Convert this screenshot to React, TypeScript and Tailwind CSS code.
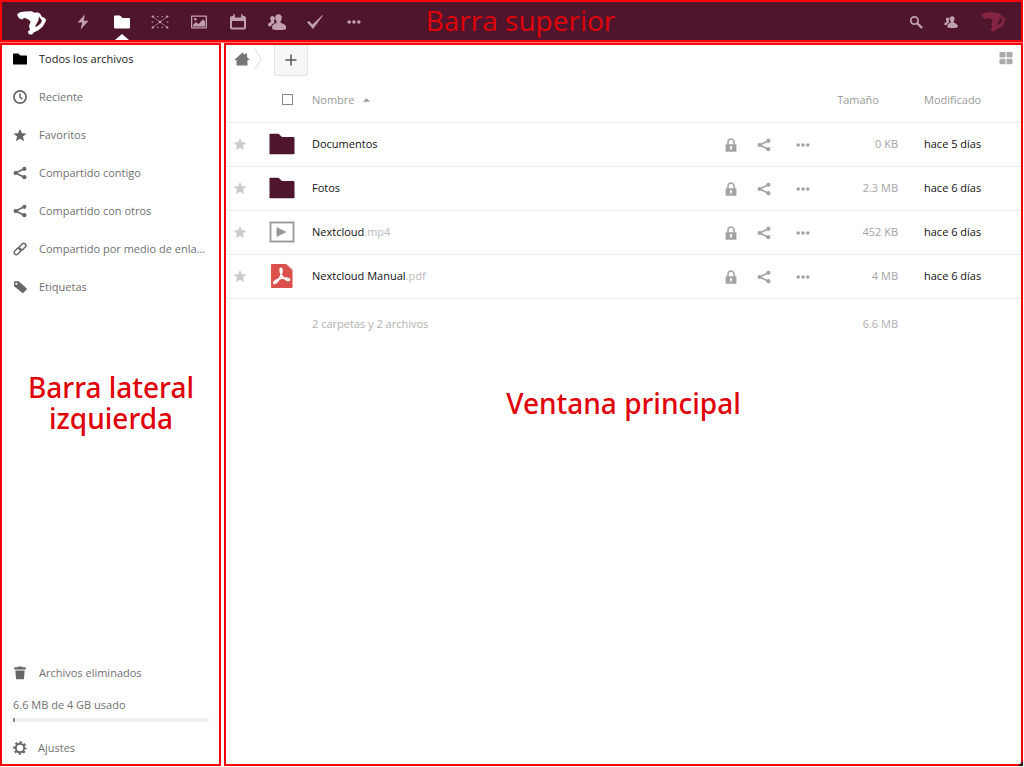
import React from "react";

type IconProps = { className?: string };

const Folder = ({ className }: IconProps) => (
  <svg viewBox="0 0 16 16" className={className} fill="currentColor" aria-hidden="true">
    <path d="M0 2.4Q0 1.6.8 1.6H6L8.6 4H15.2Q16 4 16 4.8V13.6Q16 14.4 15.2 14.4H.8Q0 14.4 0 13.6Z" />
  </svg>
);

const Logo = ({ className }: IconProps) => (
  <svg viewBox="0 0 30 24" className={className} fill="currentColor" aria-hidden="true">
    <path
      fillRule="evenodd"
      d="M.3 3 3 1.200 8 .4l6.500-.2L18 1.800 20 1.200l3 1.300 2 3.500 2 .5 2.200 2.300-1.200 3-2.400 4L21 19.400l-4 1.800L15 23.400l-3.200-.2-1-2.600L13 19l-1-4 1.600-4.600L11 8.200 7 6.800 5.600 8.400 2.400 7.600.6 5.200ZM22 5.600l-.6 4L17.800 15.800l2.600-.6L23.600 12.600 25 9.800Z"
    />
  </svg>
);

const Bolt = ({ className }: IconProps) => (
  <svg viewBox="0 0 16 16" className={className} fill="currentColor" aria-hidden="true">
    <path d="M9.800.5 2.600 8.600H7.200L5.600 15.500 13.600 6.800H8.800Z" />
  </svg>
);

const Nodes = ({ className }: IconProps) => (
  <svg viewBox="0 0 20 16" className={className} fill="currentColor" aria-hidden="true">
    <path d="M3 2.500 17 13.500M17 2.500 3 13.500" stroke="currentColor" strokeWidth="1" strokeDasharray="2 .7" />
    <circle cx="2" cy="2" r="1.300" />
    <circle cx="18" cy="2" r="1.300" />
    <circle cx="2" cy="14" r="1.300" />
    <circle cx="18" cy="14" r="1.300" />
    <circle cx="10" cy="8" r="1.500" />
    <circle cx="7.500" cy="2" r=".8" />
    <circle cx="12.500" cy="2" r=".8" />
    <circle cx="7.500" cy="14" r=".8" />
    <circle cx="12.500" cy="14" r=".8" />
    <circle cx="1.500" cy="8" r=".8" />
    <circle cx="18.500" cy="8" r=".8" />
  </svg>
);

const Picture = ({ className }: IconProps) => (
  <svg viewBox="0 0 16 16" className={className} fill="currentColor" aria-hidden="true">
    <path fillRule="evenodd" d="M.7 1.500H15.300Q16 1.500 16 2.200V13.800Q16 14.500 15.300 14.500H.7Q0 14.500 0 13.800V2.200Q0 1.500.7 1.500ZM1.300 2.800V13.200H14.700V2.800Z" />
    <path d="M2 12.500V11L5 8l2.500 2.200L12 5.200l2 2.300v5Z" />
    <circle cx="4.300" cy="5.200" r="1.300" />
  </svg>
);

const Calendar = ({ className }: IconProps) => (
  <svg viewBox="0 0 16 16" className={className} fill="currentColor" aria-hidden="true">
    <path
      fillRule="evenodd"
      d="M3.200 1Q3.200 0 4 0T4.900 1V3.500H11.100V1Q11.100 0 12 0T12.800 1V2H14Q16 2 16 4V13.500Q16 15.500 14 15.500H2Q0 15.500 0 13.500V4Q0 2 2 2H3.200ZM2 7V13.500H14V7Z"
    />
  </svg>
);

const People = ({ className }: IconProps) => (
  <svg viewBox="0 0 18 16" className={className} fill="currentColor" aria-hidden="true">
    <path d="M10.500.2c2 0 3.300 1.500 3.300 3.500 0 1.300-.4 2.500-1.200 3.300v1.500c.4 1 5.400 1.500 5.400 4.200v2.300c-1 .7-3 1-7 1s-6-.3-6.800-1v-2.300c0-2.700 4-3.200 4.400-4.200V7C7.700 6.200 7.200 5 7.200 3.700 7.200 1.700 8.500.2 10.500.2Z" />
    <path d="M4.500 2c1.400 0 2.300 1 2.300 2.500 0 1-.3 1.700-.8 2.200v1l1 .8C5.300 9.700 3.300 10 3.200 12.300 1.500 12.200.5 12 0 11.700v-1.200c0-1.700 2.600-2.100 3-2.800v-1c-.5-.5-.8-1.200-.8-2.200C2.200 3 3.100 2 4.500 2Z" />
  </svg>
);

const Check = ({ className }: IconProps) => (
  <svg viewBox="0 0 16 16" className={className} fill="currentColor" aria-hidden="true">
    <path d="M0 8.300 2.200 7 5.400 10.600 15.600 1 16 1.500 6 15Z" />
  </svg>
);

const Dots = ({ className }: IconProps) => (
  <svg viewBox="0 0 16 16" className={className} fill="currentColor" aria-hidden="true">
    <circle cx="3.200" cy="8" r="1.800" />
    <circle cx="8" cy="8" r="1.800" />
    <circle cx="12.800" cy="8" r="1.800" />
  </svg>
);

const Search = ({ className }: IconProps) => (
  <svg viewBox="0 0 16 16" className={className} fill="none" stroke="currentColor" aria-hidden="true">
    <circle cx="6.200" cy="6.200" r="4.200" strokeWidth="2" />
    <path d="m9.500 9.500 4.700 4.700" strokeWidth="2.600" strokeLinecap="round" />
  </svg>
);

const Clock = ({ className }: IconProps) => (
  <svg viewBox="0 0 16 16" className={className} fill="none" stroke="currentColor" aria-hidden="true">
    <circle cx="8" cy="8" r="6.900" strokeWidth="2" />
    <path d="M8 4v4.200l2.800 2.400" strokeWidth="1.800" />
  </svg>
);

const Star = ({ className }: IconProps) => (
  <svg viewBox="0 0 16 16" className={className} fill="currentColor" aria-hidden="true">
    <path d="m8 .8 2.100 5.100 5.500.4-4.200 3.500 1.300 5.400L8 12.300l-4.700 2.900 1.300-5.400L.4 6.300l5.500-.4Z" />
  </svg>
);

const Share = ({ className }: IconProps) => (
  <svg viewBox="0 0 16 16" className={className} fill="currentColor" aria-hidden="true">
    <path d="M13 3.200 3 8l10 4.800" fill="none" stroke="currentColor" strokeWidth="2" />
    <circle cx="13" cy="3.200" r="2.400" />
    <circle cx="3" cy="8" r="2.400" />
    <circle cx="13" cy="12.800" r="2.400" />
  </svg>
);

const LinkIcon = ({ className }: IconProps) => (
  <svg viewBox="0 0 16 16" className={className} fill="none" stroke="currentColor" strokeWidth="1.700" aria-hidden="true">
    <rect x="6.300" y="2.900" width="9" height="5" rx="2.500" transform="rotate(-45 10.800 5.400)" />
    <rect x=".7" y="8.100" width="9" height="5" rx="2.500" transform="rotate(-45 5.200 10.600)" />
  </svg>
);

const Tag = ({ className }: IconProps) => (
  <svg viewBox="0 0 16 16" className={className} fill="currentColor" aria-hidden="true">
    <path fillRule="evenodd" d="M2 1.500h4.500l9 8q.6.700 0 1.400l-3.600 3.800q-.7.700-1.400 0L1.200 7V2.500Q1.200 1.500 2 1.500ZM3.800 3a1.200 1.200 0 1 0 .1 0Z" />
  </svg>
);

const Trash = ({ className }: IconProps) => (
  <svg viewBox="0 0 16 16" className={className} fill="currentColor" aria-hidden="true">
    <path d="M5.500 1.300 6.200.6h3.600l.7.700H14.500V4H1.500V1.300ZM2.600 5h10.800l-1 10.200H3.600Z" />
  </svg>
);

const Gear = ({ className }: IconProps) => (
  <svg viewBox="0 0 16 16" className={className} fill="none" stroke="currentColor" aria-hidden="true">
    <circle cx="8" cy="8" r="4.800" strokeWidth="2.200" />
    <circle cx="8" cy="8" r="6.700" strokeWidth="2.200" strokeDasharray="2.600 2.662" strokeDashoffset="1.300" />
  </svg>
);

const Home = ({ className }: IconProps) => (
  <svg viewBox="0 0 16 16" className={className} fill="currentColor" aria-hidden="true">
    <path d="M8.500 1.500 11 4V2.500h2V6l2.800 3H13.500v5.500h-11V9H.2Z" />
  </svg>
);

const Lock = ({ className }: IconProps) => (
  <svg viewBox="0 0 16 16" className={className} fill="currentColor" aria-hidden="true">
    <path
      fillRule="evenodd"
      d="M8 .2c2.700 0 4.400 2 4.400 4.500V7H14.200v8.800H1.800V7H3.600V4.700C3.600 2.200 5.300.2 8 .2ZM8 2C6.400 2 5.400 3.200 5.400 4.800V7h5.200V4.800C10.600 3.200 9.600 2 8 2ZM8 9a1.400 1.400 0 0 0-.8 2.500V13.500H8.800V11.500A1.400 1.400 0 0 0 8 9Z"
    />
  </svg>
);

const FolderFile = () => (
  <svg viewBox="0 0 26 22" className="block h-[22px] w-[26px] fill-[#4f152d]" aria-hidden="true">
    <path d="M.5 1.500Q.5.800 1.200.8H9.500L13 4H24.500Q25.500 4 25.500 5V20.300Q25.500 21.300 24.500 21.300H.5Z" />
  </svg>
);

const VideoFile = () => (
  <svg viewBox="0 0 26 22" className="block h-[22px] w-[26px]" aria-hidden="true">
    <rect x="1.500" y="1.500" width="23" height="19" fill="none" stroke="#969696" strokeWidth="1.800" />
    <path d="M7.500 6 17.500 11 7.500 16Z" fill="#969696" />
  </svg>
);

const PdfFile = () => (
  <svg viewBox="0 0 26 26" className="block size-[26px]" aria-hidden="true">
    <path d="M3 1H17L23.500 7V24Q23.500 25 22.500 25H3Q2 25 2 24V2Q2 1 3 1Z" fill="#d9504c" />
    <path d="M17.500 1 23.500 6.800" stroke="#eeb0ae" strokeWidth="1" />
    <path
      d="M11.500 5.500c2-1 1.800 3.500.3 7-1.600 4-4.500 8-6.600 8-1.800-1.500 3.500-4.800 8-5.300 4-.6 7.500.4 7.200 1.700-.6 1.600-4.800-.4-6.900-3.200-2-2.700-3-7.500-2-8.200Z"
      fill="none"
      stroke="#fff"
      strokeWidth="1.700"
    />
  </svg>
);

const apps = [
  { label: "Actividad", Icon: Bolt, size: "size-4" },
  { label: "Archivos", Icon: Folder, size: "size-4" },
  { label: "Nodos", Icon: Nodes, size: "h-4 w-[18px]" },
  { label: "Galería", Icon: Picture, size: "size-4" },
  { label: "Calendario", Icon: Calendar, size: "size-4" },
  { label: "Contactos", Icon: People, size: "h-4 w-[18px]" },
  { label: "Tareas", Icon: Check, size: "size-4" },
  { label: "Más", Icon: Dots, size: "size-4" },
];

const places = [
  { label: "Todos los archivos", Icon: Folder },
  { label: "Reciente", Icon: Clock },
  { label: "Favoritos", Icon: Star },
  { label: "Compartido contigo", Icon: Share },
  { label: "Compartido con otros", Icon: Share },
  { label: "Compartido por medio de enla...", Icon: LinkIcon },
  { label: "Etiquetas", Icon: Tag },
];

const files = [
  { name: "Documentos", ext: "", size: "0 KB", date: "hace 5 días", File: FolderFile },
  { name: "Fotos", ext: "", size: "2.3 MB", date: "hace 6 días", File: FolderFile },
  { name: "Nextcloud", ext: ".mp4", size: "452 KB", date: "hace 6 días", File: VideoFile },
  { name: "Nextcloud Manual", ext: ".pdf", size: "4 MB", date: "hace 6 días", File: PdfFile },
];

function TopBar() {
  return (
    <header className="relative flex h-[42px] items-center justify-between border-2 border-[#fa0008] bg-[#4f152d] pr-3.5 pl-[15px] text-[#c19fae]">
      <div className="flex items-center gap-[27px]">
        <a href="#inicio" aria-label="Inicio" className="text-white">
          <Logo className="mt-1 h-6 w-[30px]" />
        </a>
        <nav aria-label="Aplicaciones" className="flex w-[289px] justify-between">
          {apps.map(({ label, Icon, size }) => (
            <a
              key={label}
              href="#app"
              aria-label={label}
              className={`relative flex h-[38px] w-[18px] items-center justify-center pt-0.5 ${label === "Archivos" ? "text-white" : ""}`}
            >
              <Icon className={size} />
              {label === "Archivos" && (
                <svg viewBox="0 0 14 6" className="absolute bottom-0 h-1.5 w-3.5 fill-white" aria-hidden="true">
                  <path d="M7 0 14 6H0Z" />
                </svg>
              )}
            </a>
          ))}
        </nav>
      </div>
      <p className="absolute inset-x-0 top-0 pl-[18px] text-center text-[28px] leading-[36px] text-[#e00008]">Barra superior</p>
      <div className="relative flex items-center pt-0.5">
        <button type="button" aria-label="Buscar" className="mr-[21px]">
          <Search className="size-3.5" />
        </button>
        <button type="button" aria-label="Contactos" className="mr-[23px]">
          <People className="h-3 w-3.5" />
        </button>
        <button type="button" aria-label="Cuenta" className="text-[#832443]">
          <Logo className="h-5 w-[26px]" />
        </button>
      </div>
    </header>
  );
}

function Sidebar() {
  return (
    <aside className="flex w-[221px] shrink-0 flex-col border-2 border-[#fa0008] pr-2.5 pl-[11px] text-[#707070]">
      <nav aria-label="Archivos" className="flex flex-col gap-5 pt-[5px]">
        {places.map(({ label, Icon }, i) => (
          <a key={label} href="#lugar" className={`flex h-[18px] items-center gap-3 ${i === 0 ? "text-[#222]" : ""}`}>
            <Icon className={`size-3.5 shrink-0 ${i === 0 ? "text-black" : "text-[#666]"}`} />
            <span className="whitespace-nowrap">{label}</span>
          </a>
        ))}
      </nav>
      <p className="mt-[76px] text-center font-['Noto_Sans',sans-serif] text-[28px] leading-[31px] font-medium text-[#e00008]">
        Barra lateral
        <br />
        izquierda
      </p>
      <a href="#papelera" className="mt-auto flex h-[18px] items-center gap-3">
        <Trash className="size-3.5 text-[#666]" />
        Archivos eliminados
      </a>
      <label htmlFor="cuota" className="mt-3.5 leading-[18px]">
        6.6 MB de 4 GB usado
      </label>
      <div id="cuota" role="progressbar" aria-label="Cuota" aria-valuenow={0} className="mt-1 h-1 rounded-sm bg-[#efefef]">
        <div className="h-1 w-0.5 bg-[#888]" />
      </div>
      <button type="button" className="mt-[17px] mb-[7px] flex h-[18px] items-center gap-[11px]">
        <Gear className="size-3.5 text-[#666]" />
        Ajustes
      </button>
    </aside>
  );
}

function FileTable() {
  return (
    <table className="mt-0.5 w-full table-fixed border-collapse text-left">
      <colgroup>
        <col className="w-[43px]" />
        <col className="w-[43px]" />
        <col />
        <col className="w-[98px]" />
        <col className="w-[76px]" />
        <col className="w-[123px]" />
      </colgroup>
      <thead className="text-[#999]">
        <tr className="h-11 border-b border-[#eee]">
          <th />
          <th>
            <input
              type="checkbox"
              aria-label="Seleccionar todo"
              className="ml-[13px] block size-[11px] appearance-none border border-[#888] bg-white"
            />
          </th>
          <th className="font-normal">
            <button type="button" className="flex items-center gap-2">
              Nombre
              <svg viewBox="0 0 8 4" className="h-1 w-[7px] fill-[#999]" aria-hidden="true">
                <path d="M4 0 8 4H0Z" />
              </svg>
            </button>
          </th>
          <th />
          <th className="pr-[19px] text-right font-normal">Tamaño</th>
          <th className="pl-[26px] font-normal">Modificado</th>
        </tr>
      </thead>
      <tbody>
        {files.map(({ name, ext, size, date, File }) => (
          <tr key={name} className="h-11 border-b border-[#eee]">
            <td>
              <button type="button" aria-label="Favorito" className="ml-[7px] block text-[#ccc]">
                <Star className="size-3.5" />
              </button>
            </td>
            <td>
              <File />
            </td>
            <td className="text-[#111]">
              <a href="#archivo">
                {name}
                <span className="text-[#bbb]">{ext}</span>
              </a>
            </td>
            <td>
              <div className="flex items-center pt-0.5 text-[#a3a3a3]">
                <button type="button" aria-label="Permisos" className="mr-[19px]">
                  <Lock className="size-3.5" />
                </button>
                <button type="button" aria-label="Compartir" className="mr-6">
                  <Share className="size-3.5" />
                </button>
                <button type="button" aria-label="Más acciones">
                  <Dots className="size-4" />
                </button>
              </div>
            </td>
            <td className="text-right text-[#a3a3a3]">{size}</td>
            <td className="pl-[26px] text-[#111]">{date}</td>
          </tr>
        ))}
      </tbody>
      <tfoot className="text-[#b0b0b0]">
        <tr className="h-[52px]">
          <td />
          <td />
          <td>2 carpetas y 2 archivos</td>
          <td />
          <td className="text-right">6.6 MB</td>
          <td />
        </tr>
      </tfoot>
    </table>
  );
}

export default function App() {
  return (
    <div className="flex min-h-screen flex-col bg-white pr-px font-['Open_Sans','Noto_Sans',sans-serif] text-[11px] leading-[18px]">
      <TopBar />
      <div className="flex grow gap-[3px] border-t border-[#ff7078] pb-px">
        <Sidebar />
        <main className="relative min-w-0 grow border-2 border-[#fa0008]">
          <div className="flex items-start justify-between pr-2 pl-2">
            <div className="flex items-start">
              <a href="#inicio" aria-label="Inicio" className="mt-1.5 text-[#777]">
                <Home className="size-4" />
              </a>
              <svg viewBox="0 0 8 20" className="mt-1 ml-1 h-5 w-2 fill-none stroke-[#ddd]" aria-hidden="true">
                <path d="M1 0 7 10 1 20" />
              </svg>
              <button
                type="button"
                aria-label="Nuevo"
                className="ml-3 flex h-[31px] w-[34px] items-center justify-center rounded-b-[3px] border border-t-0 border-[#e3e3e3] bg-[#f7f7f7]"
              >
                <svg viewBox="0 0 12 12" className="size-3 stroke-[#555]" aria-hidden="true">
                  <path d="M6 .5V11.500M.5 6H11.500" strokeWidth="1.500" />
                </svg>
              </button>
            </div>
            <button type="button" aria-label="Vista de cuadrícula" className="mt-1.5">
              <svg viewBox="0 0 14 14" className="size-3.5 fill-[#aaa]" aria-hidden="true">
                <rect x=".5" y="1" width="6" height="5.500" rx="1" />
                <rect x="7.500" y="1" width="6" height="5.500" rx="1" />
                <rect x=".5" y="7.800" width="6" height="5.500" rx="1" />
                <rect x="7.500" y="7.800" width="6" height="5.500" rx="1" />
              </svg>
            </button>
          </div>
          <FileTable />
          <p className="mt-[34px] text-center font-['Noto_Sans',sans-serif] text-[28px] leading-[38px] font-medium text-[#e00008]">
            Ventana principal
          </p>
          <svg viewBox="0 0 5 5" className="absolute -right-0.5 -bottom-0.5 size-[5px] fill-[#222]" aria-hidden="true">
            <path d="M5 0V5H0Z" />
          </svg>
        </main>
      </div>
    </div>
  );
}
